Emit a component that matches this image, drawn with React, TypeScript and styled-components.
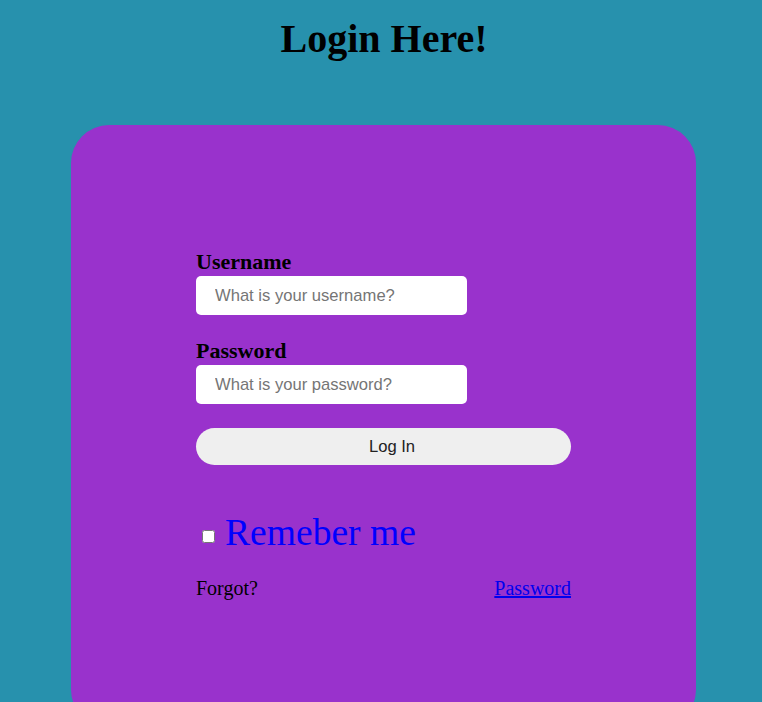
import React from "react";
import styled, { createGlobalStyle } from "styled-components";

const Global = createGlobalStyle`
  html, body {
    margin: 0;
    padding: 0;
    background: #2791ad;
    font-family: "Liberation Serif", "Times New Roman", serif;
  }
`;

const Page = styled.div`
  min-height: 100vh;
  padding-top: 15px;
  box-sizing: border-box;
`;

const Title = styled.h1`
  margin: 0 0 63px 0;
  padding-left: 6px;
  text-align: center;
  font-size: 40px;
  font-weight: bold;
  color: #000;
  line-height: normal;
`;

const Card = styled.div`
  box-sizing: border-box;
  width: 625px;
  min-height: 603px;
  margin-left: 71px;
  padding: 124px 125px 0 125px;
  background: #9932cc;
  border-radius: 38px;
`;

const Form = styled.form`
  display: flex;
  flex-direction: column;
  width: 375px;
`;

const Label = styled.label<{ $top?: number }>`
  display: block;
  margin-top: ${(p) => p.$top ?? 0}px;
  font-size: 22px;
  font-weight: bold;
  color: #000;
  line-height: normal;
`;

const Input = styled.input`
  box-sizing: border-box;
  width: 271px;
  height: 39px;
  margin-top: 1px;
  padding: 0 19px;
  border: none;
  border-radius: 5px;
  background: #fff;
  font-family: "Liberation Sans", Arial, sans-serif;
  font-size: 16.6px;
  outline: none;
  &::placeholder {
    color: #757575;
  }
`;

const Button = styled.button`
  box-sizing: border-box;
  width: 375px;
  height: 37px;
  margin-top: 24px;
  padding: 0 0 0 17px;
  border: none;
  border-radius: 19px;
  background: #efefef;
  color: #222;
  font-family: "Liberation Sans", Arial, sans-serif;
  font-size: 16.6px;
  cursor: pointer;
`;

const RememberRow = styled.label`
  display: block;
  margin-top: 46px;
  font-size: 37.6px;
  color: #0000ff;
  line-height: normal;
`;

const Check = styled.input`
  width: 13px;
  height: 13px;
  margin: 3px 10px 3px 6px;
  vertical-align: 2px;
`;

const Bottom = styled.div`
  display: flex;
  justify-content: space-between;
  margin-top: 23px;
  font-size: 20px;
  line-height: normal;
  color: #000;
`;

const Link = styled.a`
  color: #0000ee;
  text-decoration: underline;
`;

export default function App() {
  return (
    <>
      <Global />
      <Page>
        <Title>Login Here!</Title>
        <Card>
          <Form onSubmit={(e) => e.preventDefault()}>
            <Label htmlFor="u">Username</Label>
            <Input id="u" type="text" placeholder="What is your username?" />
            <Label htmlFor="p" $top={23}>Password</Label>
            <Input id="p" type="password" placeholder="What is your password?" />
            <Button type="submit">Log In</Button>
            <RememberRow>
              <Check type="checkbox" />
              Remeber me
            </RememberRow>
            <Bottom>
              <span>Forgot?</span>
              <Link href="#">Password</Link>
            </Bottom>
          </Form>
        </Card>
      </Page>
    </>
  );
}
